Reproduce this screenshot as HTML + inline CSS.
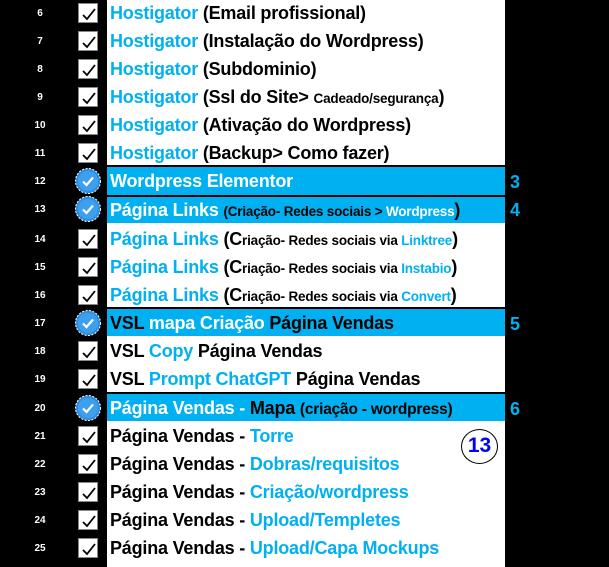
<!DOCTYPE html><html><head><meta charset="utf-8"><style>
body{margin:0;width:609px;height:567px;background:#000;overflow:hidden;position:relative;font-family:"Liberation Sans",sans-serif}
.w{position:absolute;left:107px;top:0;width:398px;height:567px;background:#fff}
.r{position:absolute;left:0;width:609px;height:28px}
.n{position:absolute;left:30px;width:20px;text-align:center;top:9px;color:#fff;font-size:10px;font-weight:bold}
.cb{position:absolute;left:78px;top:4px;width:20px;height:20px;background:#fff;border:1px solid #888;box-sizing:border-box}
.cb svg{position:absolute;left:2px;top:2px}
.bd{position:absolute;left:75px;top:1px;width:26px;height:26px}
.t{position:absolute;left:110px;top:4px;font-size:18px;font-weight:bold;color:#000;white-space:nowrap;letter-spacing:-0.2px}
.b{color:#00b0f0}
.s{font-size:13.5px}
.hl{position:absolute;left:107px;width:398px;height:27px;background:#00b0f0;border-top:2px solid #000}
.hl .t{color:#fff;left:3px;top:4px}
.num{position:absolute;left:510px;top:5px;color:#00b0f0;font-weight:bold;font-size:18px}
</style></head><body>
<div class="w"></div>
<svg width="0" height="0" style="position:absolute"><defs>
<symbol id="ck" viewBox="0 0 16 16"><path d="M2 9 L6 13 L14 3" stroke="#000" stroke-width="1.8" fill="none"/></symbol>
<symbol id="bg" viewBox="0 0 26 26"><circle cx="13" cy="13" r="12.5" fill="#2d8fe0" stroke="#fff" stroke-width="1" stroke-dasharray="2 1.5"/><circle cx="13" cy="13" r="10" fill="#3da0ee"/><path d="M8 13.5 L11.5 17 L18 9.5" stroke="#fff" stroke-width="2.2" fill="none"/></symbol>
</defs></svg>

<div class="r" style="top:-1px"><div class="n">6</div><div class="cb"><svg width="16" height="16"><use href="#ck"/></svg></div><div class="t"><span class="b">Hostigator</span> (Email profissional)</div></div>
<div class="r" style="top:27px"><div class="n">7</div><div class="cb"><svg width="16" height="16"><use href="#ck"/></svg></div><div class="t"><span class="b">Hostigator</span> (Instalação do Wordpress)</div></div>
<div class="r" style="top:55px"><div class="n">8</div><div class="cb"><svg width="16" height="16"><use href="#ck"/></svg></div><div class="t"><span class="b">Hostigator</span> (Subdominio)</div></div>
<div class="r" style="top:83px"><div class="n">9</div><div class="cb"><svg width="16" height="16"><use href="#ck"/></svg></div><div class="t"><span class="b">Hostigator</span> (Ssl do Site&gt; <span class="s">Cadeado/segurança</span>)</div></div>
<div class="r" style="top:111px"><div class="n">10</div><div class="cb"><svg width="16" height="16"><use href="#ck"/></svg></div><div class="t"><span class="b">Hostigator</span> (Ativação do Wordpress)</div></div>
<div class="r" style="top:139px"><div class="n">11</div><div class="cb"><svg width="16" height="16"><use href="#ck"/></svg></div><div class="t"><span class="b">Hostigator</span> (Backup&gt; Como fazer)</div></div>

<div class="r" style="top:167px"><div class="n">12</div><div class="hl" style="top:-2px;height:29px"><div class="t">Wordpress Elementor</div></div><svg class="bd" width="26" height="26"><use href="#bg"/></svg><div class="num">3</div></div>
<div class="r" style="top:195px"><div class="n">13</div><div class="hl" style="top:0px;height:26px"><div class="t" style="top:3px">Página Links <span class="s" style="color:#000">(Criação- Redes sociais &gt; </span><span class="s">Wordpress</span><span style="color:#000">)</span></div></div><svg class="bd" width="26" height="26"><use href="#bg"/></svg><div class="num">4</div></div>

<div class="r" style="top:225px"><div class="n">14</div><div class="cb"><svg width="16" height="16"><use href="#ck"/></svg></div><div class="t"><span class="b">Página Links</span> (C<span class="s">riação- Redes sociais via <span class="b">Linktree</span></span>)</div></div>
<div class="r" style="top:253px"><div class="n">15</div><div class="cb"><svg width="16" height="16"><use href="#ck"/></svg></div><div class="t"><span class="b">Página Links</span> (C<span class="s">riação- Redes sociais via <span class="b">Instabio</span></span>)</div></div>
<div class="r" style="top:281px"><div class="n">16</div><div class="cb"><svg width="16" height="16"><use href="#ck"/></svg></div><div class="t"><span class="b">Página Links</span> (C<span class="s">riação- Redes sociais via <span class="b">Convert</span></span>)</div></div>

<div class="r" style="top:309px"><div class="n">17</div><div class="hl" style="top:-2px;height:27px"><div class="t" style="color:#000">VSL <span style="color:#fff">mapa Criação</span> Página Vendas</div></div><svg class="bd" width="26" height="26"><use href="#bg"/></svg><div class="num">5</div></div>

<div class="r" style="top:337px"><div class="n">18</div><div class="cb"><svg width="16" height="16"><use href="#ck"/></svg></div><div class="t">VSL <span class="b">Copy</span> Página Vendas</div></div>
<div class="r" style="top:365px"><div class="n">19</div><div class="cb"><svg width="16" height="16"><use href="#ck"/></svg></div><div class="t">VSL <span class="b">Prompt ChatGPT</span> Página Vendas</div></div>

<div class="r" style="top:394px"><div class="n">20</div><div class="hl" style="top:-2px;height:27px"><div class="t" style="color:#000"><span style="color:#fff">Página Vendas -</span> Mapa <span style="font-size:15.5px">(criação - wordpress)</span></div></div><svg class="bd" width="26" height="26"><use href="#bg"/></svg><div class="num">6</div></div>

<div class="r" style="top:422px"><div class="n">21</div><div class="cb"><svg width="16" height="16"><use href="#ck"/></svg></div><div class="t">Página Vendas - <span class="b">Torre</span></div></div>
<div class="r" style="top:450px"><div class="n">22</div><div class="cb"><svg width="16" height="16"><use href="#ck"/></svg></div><div class="t">Página Vendas - <span class="b">Dobras/requisitos</span></div></div>
<div class="r" style="top:478px"><div class="n">23</div><div class="cb"><svg width="16" height="16"><use href="#ck"/></svg></div><div class="t">Página Vendas - <span class="b">Criação/wordpress</span></div></div>
<div class="r" style="top:506px"><div class="n">24</div><div class="cb"><svg width="16" height="16"><use href="#ck"/></svg></div><div class="t">Página Vendas - <span class="b">Upload/Templetes</span></div></div>
<div class="r" style="top:534px"><div class="n">25</div><div class="cb"><svg width="16" height="16"><use href="#ck"/></svg></div><div class="t">Página Vendas - <span class="b">Upload/Capa Mockups</span></div></div>

<div style="position:absolute;left:461px;top:429px;width:37px;height:35px;border:1.5px solid #000;border-radius:50%;box-sizing:border-box;text-align:center;line-height:32px;color:#0000ff;font-weight:bold;font-size:21px">13</div>
</body></html>
